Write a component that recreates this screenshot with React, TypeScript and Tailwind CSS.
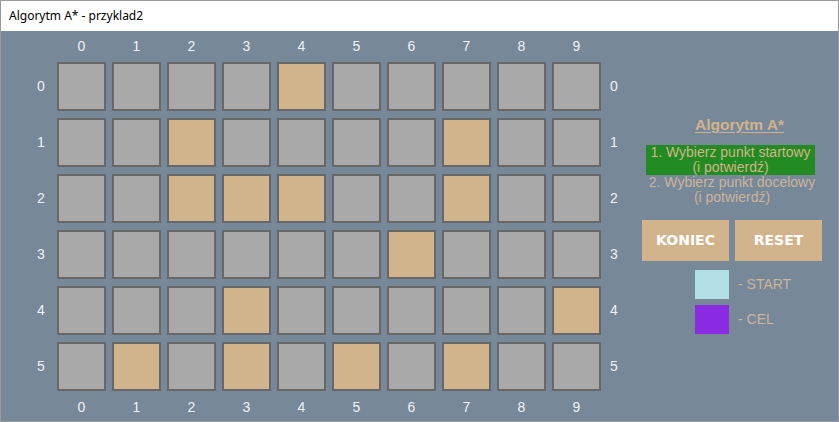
const walls: number[][] = [
  [4],
  [2, 7],
  [2, 3, 4, 7],
  [6],
  [3, 9],
  [1, 3, 5, 7],
];

const cols = [0, 1, 2, 3, 4, 5, 6, 7, 8, 9];
const rows = [0, 1, 2, 3, 4, 5];

const Label = ({ n }: { n: number }) => (
  <div className="flex items-center justify-center text-[14px] text-[#eef2f7] font-['Liberation_Sans',Arial,sans-serif]">
    {n}
  </div>
);

const Board = () => {
  return (
    <div className="grid grid-cols-[20px_repeat(10,49px)_14px] grid-rows-[18px_repeat(6,49px)_18px] gap-x-[6px] gap-y-[7px]">
      <div />
      {cols.map((c) => (
        <Label key={"t" + c} n={c} />
      ))}
      <div />
      {rows.map((r) => [
        <Label key={"l" + r} n={r} />,
        ...cols.map((c) => (
          <div
            key={r + "-" + c}
            className={`border-2 border-[#676767] ${
              walls[r].includes(c) ? "bg-[#d2b48c]" : "bg-[#a9a9a9]"
            }`}
          />
        )),
        <Label key={"r" + r} n={r} />,
      ])}
      <div />
      {cols.map((c) => (
        <Label key={"b" + c} n={c} />
      ))}
      <div />
    </div>
  );
};

const SidePanel = () => {
  return (
    <div className="flex flex-col w-[180px] ml-[21px] font-['Liberation_Sans',Arial,sans-serif]">
      <div className="mt-[79px] ml-[15px] h-[18px] leading-[18px] text-center text-[15.5px] font-bold text-[#d2b48c] underline underline-offset-2">
        Algorytm A*
      </div>
      <div className="mt-[11px] ml-[4px] w-[169px] bg-[#228b22] text-center text-[14px] leading-[15px] text-[#d2b48c]">
        1. Wybierz punkt startowy
        <br />
        (i potwierdź)
      </div>
      <div className="ml-[4px] w-[172px] text-center text-[14px] leading-[15px] text-[#cbb59b]">
        2. Wybierz punkt docelowy
        <br />
        (i potwierdź)
      </div>
      <div className="mt-[15px] flex gap-[6px]">
        <button className="w-[87px] h-[41px] bg-[#d2b48c] text-white font-bold text-[14px] font-['DejaVu_Sans',sans-serif]">
          KONIEC
        </button>
        <button className="w-[87px] h-[41px] bg-[#d2b48c] text-white font-bold text-[14px] font-['DejaVu_Sans',sans-serif]">
          RESET
        </button>
      </div>
      <div className="mt-[9px] ml-[53px] flex items-center gap-[9px]">
        <div className="w-[34px] h-[29px] bg-[#b0e0e6]" />
        <span className="text-[14px] text-[#cbb59b]">- START</span>
      </div>
      <div className="mt-[6px] ml-[53px] flex items-center gap-[9px]">
        <div className="w-[34px] h-[29px] bg-[#8a2be2]" />
        <span className="text-[14px] text-[#cbb59b]">- CEL</span>
      </div>
    </div>
  );
};

export default function App() {
  return (
    <div className="w-[839px] h-[422px] border border-[#9a9a9a] bg-[#778899] flex flex-col overflow-hidden">
      <div className="h-[30px] shrink-0 bg-white flex items-center pl-[8px] text-[12px] text-black font-['Noto_Sans',sans-serif]">
        Algorytm A* - przyklad2
      </div>
      <div className="flex pt-[6px] pl-[30px]">
        <Board />
        <SidePanel />
      </div>
    </div>
  );
}
